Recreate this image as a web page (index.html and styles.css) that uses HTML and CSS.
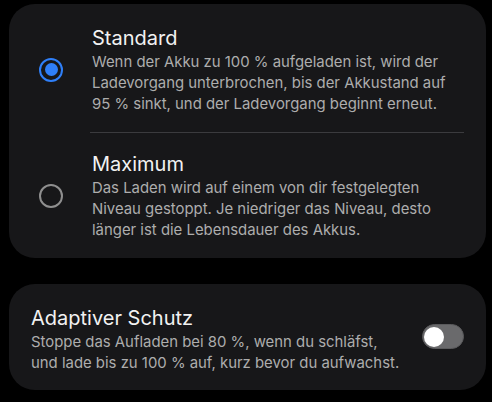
FILE: index.html
```html
<!DOCTYPE html>
<html lang="de">
<head>
<meta charset="utf-8">
<link rel="stylesheet" href="styles.css">
</head>
<body>
<div class="page">
  <section class="card options">
    <div class="option">
      <div class="radio-col"><span class="radio checked"></span></div>
      <div class="text">
        <div class="title">Standard</div>
        <div class="desc">Wenn der Akku zu 100 % aufgeladen ist, wird der Ladevorgang unterbrochen, bis der Akkustand auf 95 % sinkt, und der Ladevorgang beginnt erneut.</div>
      </div>
    </div>
    <div class="divider"></div>
    <div class="option second">
      <div class="radio-col"><span class="radio"></span></div>
      <div class="text">
        <div class="title">Maximum</div>
        <div class="desc">Das Laden wird auf einem von dir festgelegten Niveau gestoppt. Je niedriger das Niveau, desto länger ist die Lebensdauer des Akkus.</div>
      </div>
    </div>
  </section>
  <section class="card adaptive">
    <div class="text">
      <div class="title">Adaptiver Schutz</div>
      <div class="desc">Stoppe das Aufladen bei 80 %, wenn du schläfst, und lade bis zu 100 % auf, kurz bevor du aufwachst.</div>
    </div>
    <span class="toggle"><span class="thumb"></span></span>
  </section>
</div>
</body>
</html>
```
FILE: styles.css
```css
html, body {
  margin: 0;
  padding: 0;
  background: #000;
}
body {
  font-family: Inter, "Noto Sans", sans-serif;
  color: #f2f2f2;
}
.page {
  width: 492px;
  height: 402px;
  padding: 4px 6px 0 9px;
  box-sizing: border-box;
  display: flex;
  flex-direction: column;
  gap: 26px;
}
.card {
  background: #171719;
  border-radius: 26px;
}
.options {
  height: 254px;
  display: flex;
  flex-direction: column;
}
.option {
  display: flex;
  align-items: center;
  height: 128px;
  box-sizing: border-box;
  padding-top: 4px;
}
.option.second {
  height: 126px;
  padding-top: 2px;
}
.radio-col {
  width: 83px;
  display: flex;
  justify-content: flex-end;
  flex: none;
}
.radio {
  width: 24px;
  height: 24px;
  box-sizing: border-box;
  border-radius: 50%;
  border: 2px solid #8f8f8f;
  margin-right: 29px;
  display: flex;
  align-items: center;
  justify-content: center;
}
.radio.checked {
  border: 2.5px solid #2f7ff8;
}
.radio.checked::after {
  content: "";
  width: 13px;
  height: 13px;
  border-radius: 50%;
  background: #2f7ff8;
}
.text {
  flex: 1;
  min-width: 0;
}
.title {
  font-size: 20px;
  line-height: 26px;
  color: #f2f2f2;
}
.desc {
  font-size: 14.9px;
  line-height: 21px;
  color: #adadad;
  margin-top: 1px;
}
.options .text {
  padding-right: 20px;
}
.divider {
  height: 1px;
  background: #3b3b3e;
  margin: 0 22px 0 81px;
}
.adaptive {
  height: 106px;
  box-sizing: border-box;
  display: flex;
  align-items: center;
  padding: 4px 22px 0 22px;
  gap: 22px;
}
.toggle {
  flex: none;
  width: 42px;
  height: 25px;
  border-radius: 13px;
  background: #6a6a6c;
  box-sizing: border-box;
  border: 1px solid #5a5a5c;
  display: flex;
  align-items: center;
  padding-left: 1px;
  margin-top: -5px;
}
.thumb {
  width: 20px;
  height: 20px;
  border-radius: 50%;
  background: #fff;
}
```
